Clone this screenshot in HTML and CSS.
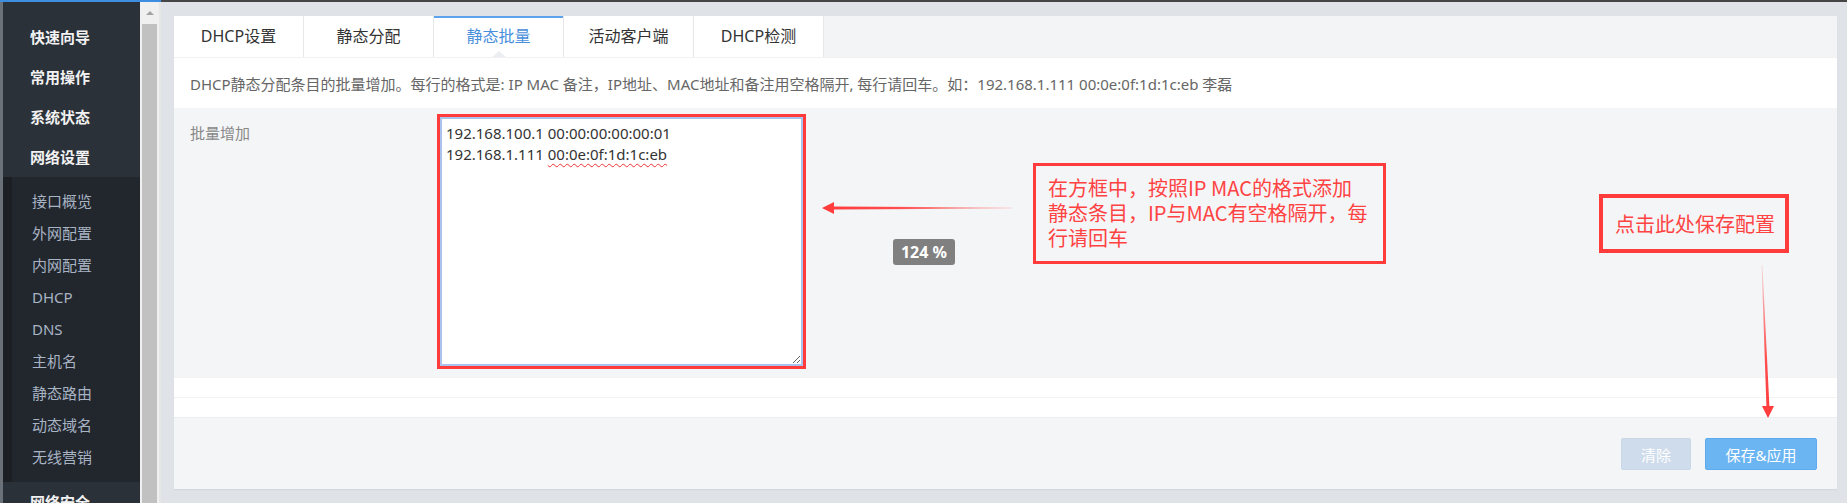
FILE: index.html
```html
<!DOCTYPE html>
<html lang="zh-CN">
<head>
  <meta charset="UTF-8">
  <title>DHCP 静态批量</title>
  <link rel="stylesheet" href="styles.css">
</head>
<body>
  <div class="topline"><span class="topline-blue"></span></div>
  <div class="layout">
    <aside class="sidebar">
      <ul class="menu">
        <li class="menu-item">快速向导</li>
        <li class="menu-item">常用操作</li>
        <li class="menu-item">系统状态</li>
        <li class="menu-item">网络设置</li>
      </ul>
      <ul class="submenu">
        <li>接口概览</li>
        <li>外网配置</li>
        <li>内网配置</li>
        <li>DHCP</li>
        <li>DNS</li>
        <li>主机名</li>
        <li>静态路由</li>
        <li>动态域名</li>
        <li>无线营销</li>
      </ul>
      <ul class="menu">
        <li class="menu-item">网络安全</li>
      </ul>
    </aside>

    <div class="scrollbar">
      <div class="scroll-btn"><span class="scroll-arrow"></span></div>
      <div class="scroll-thumb"></div>
    </div>

    <main class="main">
      <div class="panel">
        <div class="tabs">
          <div class="tab">DHCP设置</div>
          <div class="tab">静态分配</div>
          <div class="tab active">静态批量</div>
          <div class="tab">活动客户端</div>
          <div class="tab">DHCP检测</div>
        </div>

        <div class="desc">DHCP静态分配条目的批量增加。每行的格式是: IP MAC 备注，IP地址、MAC地址和备注用空格隔开, 每行请回车。如：192.168.1.111 00:0e:0f:1d:1c:eb 李磊</div>

        <div class="form-row">
          <label class="form-label">批量增加</label>
          <div class="mark-box">
            <div class="batch-input">
              <div>192.168.100.1 00:00:00:00:00:01</div>
              <div>192.168.1.111 <span class="typo">00:0e:0f:1d:1c:eb</span></div>
            </div>
          </div>
        </div>

        <div class="blank-row"></div>
        <div class="blank-row"></div>

        <div class="footer">
          <button class="btn btn-clear">清除</button>
          <button class="btn btn-save">保存&amp;应用</button>
        </div>

        <!-- annotations drawn over the page -->
        <svg class="arrows" width="1663" height="473" viewBox="0 0 1663 473">
          <defs>
            <linearGradient id="fadeLeft" x1="1" y1="0" x2="0" y2="0">
              <stop offset="0" stop-color="#ff3b3b" stop-opacity="0.15"/>
              <stop offset="0.6" stop-color="#ff3b3b" stop-opacity="0.9"/>
              <stop offset="1" stop-color="#ff3b3b"/>
            </linearGradient>
            <linearGradient id="fadeDown" x1="0" y1="0" x2="0" y2="1">
              <stop offset="0" stop-color="#ff3b3b" stop-opacity="0.15"/>
              <stop offset="0.6" stop-color="#ff3b3b" stop-opacity="0.9"/>
              <stop offset="1" stop-color="#ff3b3b"/>
            </linearGradient>
          </defs>
          <polygon points="839,191.6 839,192.4 660,193.6 660,198 648,192 660,186 660,190.4" fill="url(#fadeLeft)"/>
          <polygon points="1587.6,249 1588.4,249 1595.4,390 1600,390 1594,402 1588,390 1592.4,390" fill="url(#fadeDown)"/>
        </svg>
        <div class="note note-format">在方框中，按照IP MAC的格式添加<br>静态条目，IP与MAC有空格隔开，每<br>行请回车</div>
        <div class="note note-save">点击此处保存配置</div>
        <div class="zoom-badge">124 %</div>
      </div>
    </main>
  </div>
</body>
</html>
```

FILE: styles.css
```css
html, body {
  margin: 0;
  padding: 0;
}

body {
  width: 1847px;
  height: 503px;
  overflow: hidden;
  background-color: #dfe2e6;
  font-family: "Noto Sans", "Noto Sans CJK SC", sans-serif;
  font-size: 15px;
  color: #333;
}

ul {
  list-style: none;
  margin: 0;
  padding: 0;
}

.topline {
  display: flex;
  height: 2px;
  background-color: #454545;
}

.topline-blue {
  width: 161px;
  background-color: #3d8ee0;
}

.layout {
  display: flex;
  height: 501px;
}

/* left menu */
.sidebar {
  width: 137px;
  border-left: 3px solid #6b7178;
  background-color: #2b3139;
  padding-top: 15px;
}

.menu-item {
  height: 40px;
  line-height: 40px;
  padding-left: 27px;
  color: #f2f2f2;
  font-weight: bold;
}

.submenu {
  background-color: #22272d;
  border-left: 9px solid #1c2025;
  padding: 8px 0 9px;
}

.submenu li {
  height: 32px;
  line-height: 32px;
  padding-left: 20px;
  color: #a8b3c4;
}

.scrollbar {
  width: 19px;
  background-color: #f0f0f0;
  border-right: 2px solid #e6e6e6;
  display: flex;
  flex-direction: column;
}

.scroll-btn {
  height: 22px;
  display: flex;
  justify-content: center;
  align-items: center;
}

.scroll-arrow {
  width: 0;
  height: 0;
  border-left: 4px solid transparent;
  border-right: 4px solid transparent;
  border-bottom: 4px solid #a3a3a3;
}

.scroll-thumb {
  flex: 1;
  margin: 0 2px;
  background-color: #c1c1c1;
}

/* main panel */
.main {
  flex: 1;
  padding: 14px 10px 0 13px;
}

.panel {
  position: relative;
  height: 473px;
  background-color: #f4f5f7;
  box-shadow: 0 1px 1px rgba(0, 0, 0, 0.05);
  display: flex;
  flex-direction: column;
}

.tabs {
  display: flex;
  height: 41px;
  background-color: #f3f4f6;
}

.tab {
  position: relative;
  width: 129px;
  border-right: 1px solid #e5e7ea;
  background-color: #fff;
  text-align: center;
  line-height: 41px;
  font-size: 16px;
  color: #333;
}

.tab.active {
  color: #4a8fdb;
  box-shadow: inset 0 2px 0 #5da2ec;
}

.tab.active::after {
  content: "";
  position: absolute;
  left: 58px;
  bottom: 0;
  border-left: 7px solid transparent;
  border-right: 7px solid transparent;
  border-bottom: 6px solid #eceef1;
}

.desc {
  height: 51px;
  line-height: 53px;
  padding-left: 16px;
  background-color: #fff;
  border-top: 1px solid #f0f1f3;
  box-sizing: border-box;
  color: #666;
}

.form-row {
  display: flex;
  align-items: flex-start;
  height: 269px;
  box-sizing: border-box;
  padding: 6px 0 0 16px;
}

.form-label {
  width: 247px;
  margin-top: 9px;
  line-height: 20px;
  color: #888;
}

.mark-box {
  width: 363px;
  height: 249px;
  border: 3px solid #ff3b3b;
}

.batch-input {
  width: 351px;
  height: 237px;
  border: 2px solid #a9c3ee;
  padding: 4px;
  background-color: #fff;
  line-height: 21px;
  color: #333;
  overflow: auto;
  resize: both;
}

.typo {
  text-decoration: underline wavy #e33;
  text-decoration-thickness: 1px;
  text-underline-offset: 3px;
}

.blank-row {
  height: 19px;
  background-color: #fff;
  border-top: 1px solid #f2f3f5;
}

.footer {
  flex: 1;
  display: flex;
  justify-content: flex-end;
  align-items: flex-start;
  gap: 14px;
  padding: 20px 20px 0 0;
  border-top: 1px solid #eceef1;
}

.btn {
  height: 32px;
  border: 1px solid transparent;
  border-radius: 2px;
  font-family: inherit;
  font-size: 15px;
  color: #fff;
  padding: 0;
}

.btn-clear {
  width: 70px;
  background-color: #cfdcec;
  border-color: #c9d7e9;
}

.btn-save {
  width: 112px;
  background-color: #6bb5f2;
  border-color: #5eaaf0;
}

/* annotations */
.arrows {
  position: absolute;
  left: 0;
  top: 0;
  pointer-events: none;
}

.note {
  position: absolute;
  border: 3px solid #ff3b3b;
  color: #ff4343;
  font-family: "Noto Sans CJK SC", sans-serif;
  font-size: 20px;
  box-sizing: border-box;
}

.note-format {
  left: 859px;
  top: 147px;
  width: 353px;
  height: 101px;
  padding: 9px 0 0 12px;
  line-height: 25px;
}

.note-save {
  left: 1425px;
  top: 178px;
  width: 190px;
  height: 59px;
  border-width: 4px;
  padding-left: 12px;
  line-height: 51px;
}

.zoom-badge {
  position: absolute;
  left: 719px;
  top: 223px;
  width: 62px;
  height: 26px;
  line-height: 26px;
  border-radius: 3px;
  background-color: #808080;
  color: #fff;
  font-weight: bold;
  font-size: 16px;
  text-align: center;
}
```
